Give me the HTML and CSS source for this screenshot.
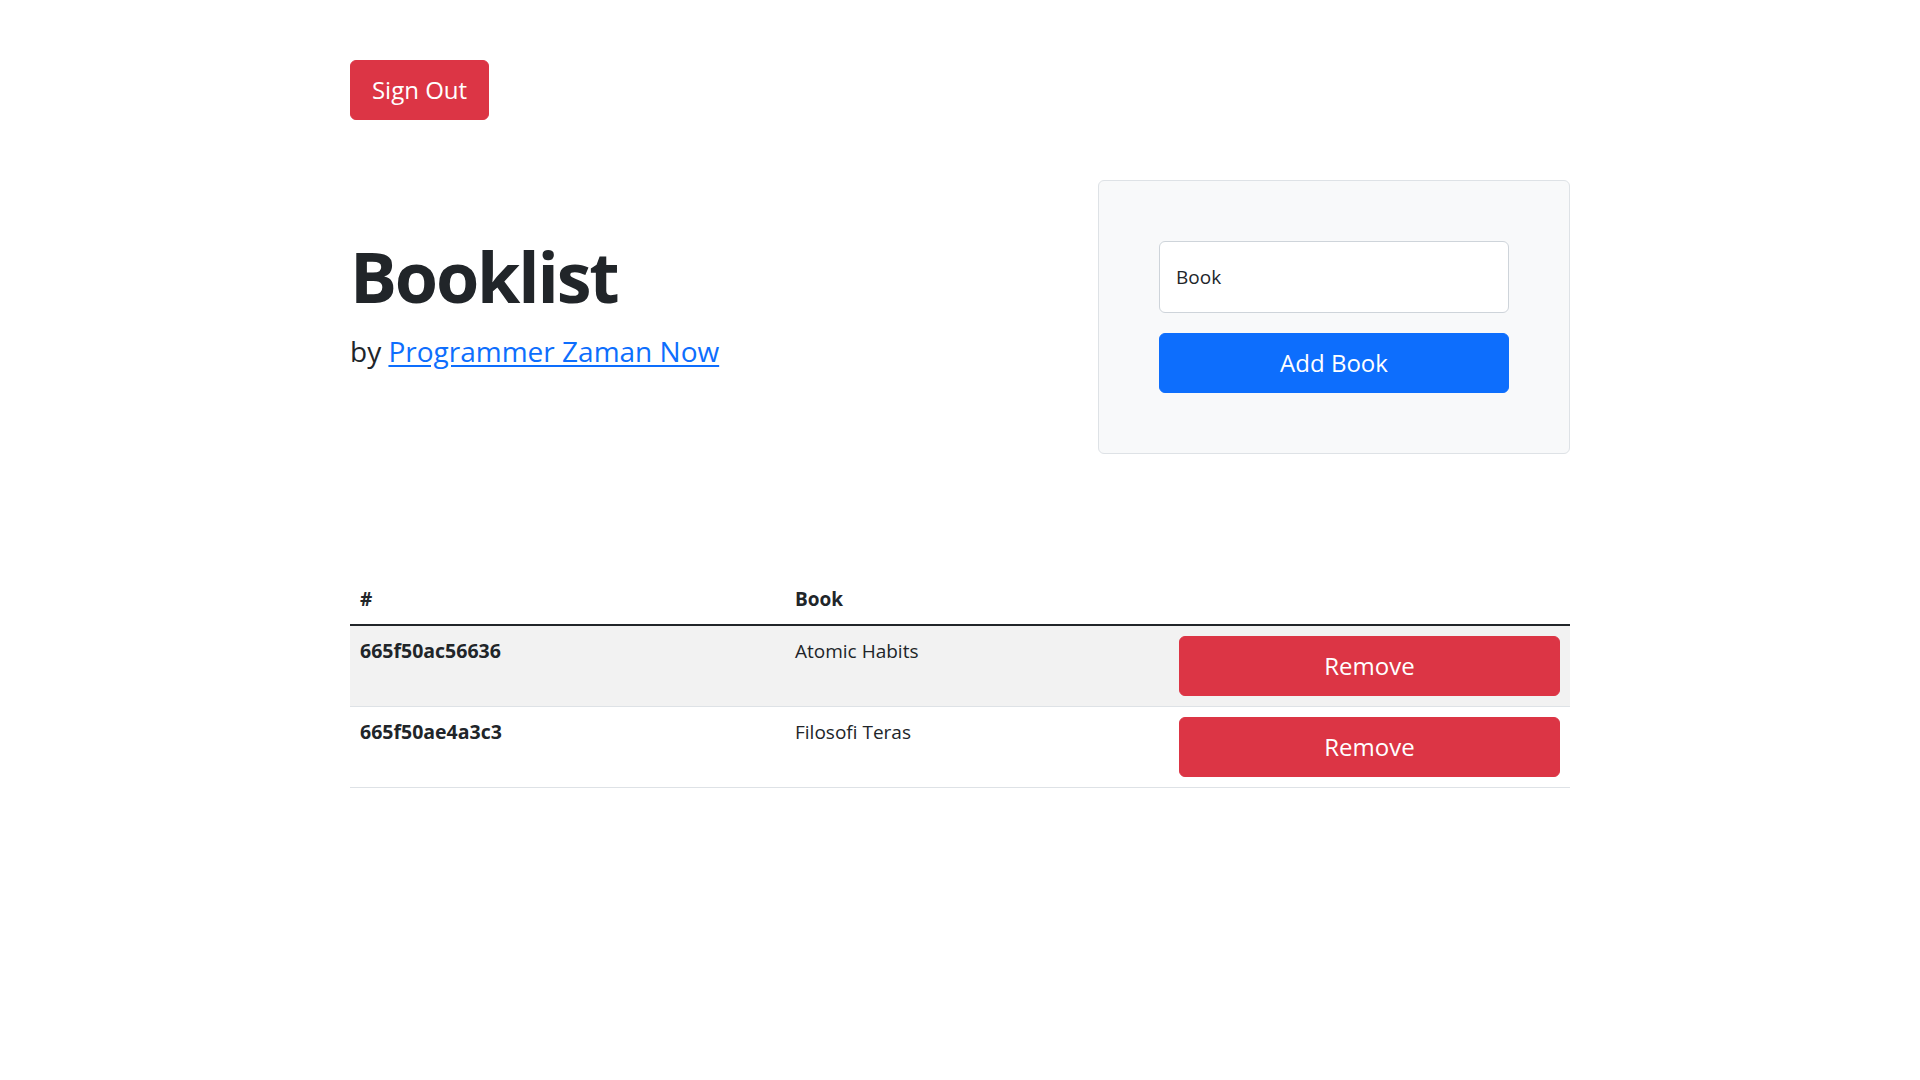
FILE: index.html
```html
<!doctype html>
<html lang="en">
<head>
<meta charset="utf-8">
<title>Booklist</title>
<link rel="stylesheet" href="styles.css">
</head>
<body>
<div class="container">
  <button class="btn btn-danger btn-lg signout">Sign Out</button>

  <div class="hero">
    <div class="intro">
      <h1 class="title">Booklist</h1>
      <p class="lead">by <a href="#">Programmer Zaman Now</a></p>
    </div>
    <div class="panel">
      <form class="add-form">
        <input class="form-control" type="text" placeholder="Book">
        <button type="button" class="btn btn-primary btn-lg btn-block">Add Book</button>
      </form>
    </div>
  </div>

  <table class="table">
    <thead>
      <tr>
        <th class="col-id">#</th>
        <th class="col-book">Book</th>
        <th class="col-action"></th>
      </tr>
    </thead>
    <tbody>
      <tr class="striped">
        <th>665f50ac56636</th>
        <td>Atomic Habits</td>
        <td><button class="btn btn-danger btn-lg btn-block">Remove</button></td>
      </tr>
      <tr>
        <th>665f50ae4a3c3</th>
        <td>Filosofi Teras</td>
        <td><button class="btn btn-danger btn-lg btn-block">Remove</button></td>
      </tr>
    </tbody>
  </table>
</div>
</body>
</html>
```

FILE: styles.css
```css
body {
  margin: 0;
  background: #fff;
  color: #212529;
  font-family: "Open Sans", "Noto Sans", sans-serif;
  font-size: 20px;
  line-height: 1.5;
}

.container { width: 1220px; margin: 0 auto; padding-top: 60px; }

/* buttons */
.btn {
  display: inline-block;
  border: 1px solid transparent;
  border-radius: 6px;
  color: #fff;
  font-family: inherit;
  cursor: pointer;
  text-align: center;
}
.btn-lg { height: 60px; padding: 0 19px; font-size: 24px; line-height: 1.5; }
.btn-danger { background: #dc3545; border-color: #dc3545; }
.btn-primary { background: #0d6efd; border-color: #0d6efd; }
.btn-block { display: block; width: 100%; }
.signout { width: 139px; padding: 0; }

/* header row */
.hero {
  display: flex;
  justify-content: space-between;
  align-items: flex-start;
  margin-top: 60px;
}
.intro { padding-top: 54px; }
.title { margin: 0 0 12px; font-size: 70px; font-weight: 700; line-height: 1.2; letter-spacing: -2.2px; }
.lead { margin: 0; font-size: 28px; font-weight: 400; line-height: 1.5; }
.lead a { color: #0d6efd; text-decoration: underline; text-underline-offset: 3px; }

.panel {
  box-sizing: border-box;
  width: 472px;
  padding: 60px;
  background: #f8f9fa;
  border: 1px solid #dee2e6;
  border-radius: 6px;
}
.form-control {
  display: block;
  box-sizing: border-box;
  width: 100%;
  height: 72px;
  margin: 0 0 20px;
  padding: 0 16px;
  border: 1px solid #ced4da;
  border-radius: 6px;
  background: #fff;
  font-family: inherit;
  font-size: 19px;
  color: #212529;
}
.form-control::placeholder { color: #212529; opacity: 1; }

/* table */
.table {
  width: 100%;
  margin-top: 120px;
  border-collapse: collapse;
  font-size: 19px;
}
.table th, .table td {
  padding: 10px;
  text-align: left;
  vertical-align: top;
  line-height: 30px;
  border-bottom: 1px solid #dee2e6;
}
.table thead th { border-bottom: 2px solid #212529; font-weight: 700; }
.table tbody th { font-weight: 700; font-size: 19.5px; }
.table tr.striped > * { background: #f2f2f2; }
.col-id { width: 415px; }
.col-book { width: 364px; }
.col-action { width: 381px; }
```
